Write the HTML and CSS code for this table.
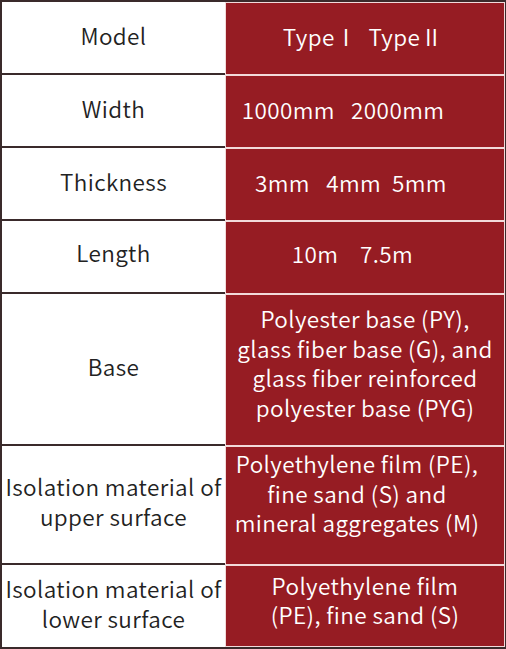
FILE: index.html
```html
<!DOCTYPE html>
<html lang="en">
<head>
    <meta charset="UTF-8">
    <meta name="viewport" content="width=device-width, initial-scale=1.0">
    <title>Product Specifications</title>
    <link rel="stylesheet" href="styles.css">
</head>
<body>
    <div class="spec-table">
        <div class="row h-72">
            <div class="name">Model</div>
            <div class="value pr-4">TypeⅠ&nbsp;&nbsp;TypeⅡ</div>
        </div>
        <div class="row h-72">
            <div class="name">Width</div>
            <div class="value pr-44">1000mm&nbsp;&nbsp;&nbsp;2000mm</div>
        </div>
        <div class="row h-72">
            <div class="name">Thickness</div>
            <div class="value pr-28">3mm&nbsp;&nbsp;&nbsp;4mm&nbsp;&nbsp;5mm</div>
        </div>
        <div class="row h-72 length">
            <div class="name">Length</div>
            <div class="value pr-25">10m&nbsp;&nbsp;&nbsp;&nbsp;7.5m</div>
        </div>
        <div class="row h-base">
            <div class="name">Base</div>
            <div class="value up-14">Polyester base (PY),<br>glass fiber base (G), and<br>glass fiber reinforced<br>polyester base (PYG)</div>
        </div>
        <div class="row h-upper">
            <div class="name up-6">Isolation material of<br>upper surface</div>
            <div class="value pr-16 up-24">Polyethylene film (PE),<br>fine sand (S) and<br>mineral aggregates (M)</div>
        </div>
        <div class="row h-lower last">
            <div class="name up-5">Isolation material of<br>lower surface</div>
            <div class="value up-12">Polyethylene film<br>(PE), fine sand (S)</div>
        </div>
    </div>
</body>
</html>
```

FILE: styles.css
```css
body {
    margin: 0;
    font-family: "Noto Sans CJK SC", "Noto Sans", sans-serif;
}
.spec-table {
    width: 506px;
    height: 649px;
    box-sizing: border-box;
    border: 2px solid #3a2a2b;
    border-right-width: 1px;
    display: flex;
    flex-direction: column;
    background: #3a2a2b;
}
.row {
    display: flex;
}
.h-72 {
    height: 73px;
}
.h-base {
    height: 152px;
}
.h-upper {
    height: 119px;
}
.h-lower {
    flex: 1;
}
.name, .value {
    display: flex;
    align-items: center;
    justify-content: center;
    text-align: center;
    font-size: 22.5px;
    font-weight: 350;
    line-height: 29.5px;
    letter-spacing: 0.4px;
    white-space: nowrap;
    box-sizing: border-box;
    padding-bottom: 4px;
}
.name {
    width: 223px;
    background: #fff;
    color: #222;
    border-bottom: 2px solid #3a2a2b;
}
.last .name {
    border-bottom: 0;
}
.value {
    flex: 1;
    background: #961c23;
    color: #fff;
    border: 1px solid #f2dada;
}
.length .name, .length .value {
    padding-bottom: 8px;
}
.pr-4 { padding-right: 4px; }
.pr-16 { padding-right: 16px; }
.pr-25 { padding-right: 25px; }
.pr-28 { padding-right: 28px; }
.pr-44 { padding-right: 44px; }
.up-5 { padding-bottom: 5px; }
.up-6 { padding-bottom: 6px; }
.up-12 { padding-bottom: 12px; }
.up-14 { padding-bottom: 14px; }
.up-24 { padding-bottom: 24px; }
```
